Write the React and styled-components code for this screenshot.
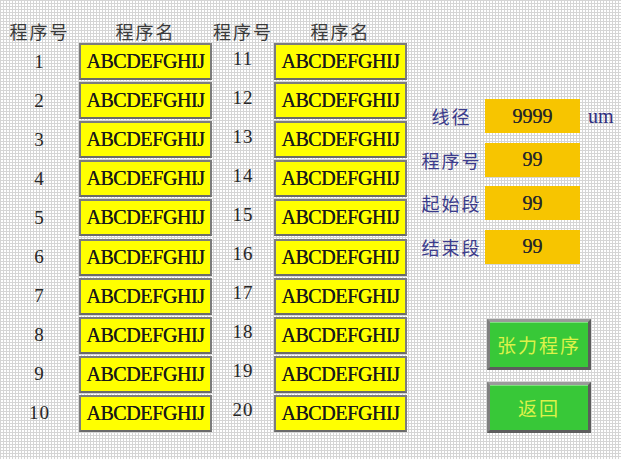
import React from 'react';
import styled, { createGlobalStyle } from 'styled-components';

const GlobalStyle = createGlobalStyle`
  body {
    margin: 0;
  }
`;

const serif = `'Liberation Serif', 'Times New Roman', serif`;
const cjk = `'Noto Sans CJK SC', 'Noto Sans', sans-serif`;

const Screen = styled.div`
  width: 621px;
  height: 459px;
  display: flex;
  overflow: hidden;
  background-color: #ffffff;
  background-image:
    linear-gradient(to right, #d5d5d5 1px, transparent 1px),
    linear-gradient(to bottom, #d5d5d5 1px, transparent 1px);
  background-size: 3px 3px;
`;

const Table = styled.div`
  display: grid;
  grid-template-columns: 79px 133px 62px 133px;
  grid-template-rows: 20px repeat(10, 37px);
  row-gap: 2.1px;
  padding-top: 21px;
  align-content: start;
`;

const HeadCell = styled.div`
  font-family: ${cjk};
  font-size: 18px;
  letter-spacing: 2px;
  line-height: 20px;
  color: #3a3a3a;
  text-align: center;
  white-space: nowrap;
`;

const Num = styled.div`
  display: flex;
  align-items: center;
  justify-content: center;
  font-family: ${serif};
  font-size: 19px;
  letter-spacing: 1px;
  color: #262626;
  padding-bottom: ${p => (p.$raised ? 6 : 0)}px;
`;

const NameBox = styled.div`
  box-sizing: border-box;
  display: flex;
  align-items: center;
  justify-content: center;
  background: #ffff00;
  border: 2px solid #7c7c7c;
  border-bottom-color: #6a6a6a;
  font-family: ${serif};
  font-size: 20px;
  letter-spacing: -0.4px;
  color: #1a1a1a;
  text-shadow: 0 0 0.6px #1a1a1a;
  white-space: nowrap;
`;

const Panel = styled.div`
  display: flex;
  flex-direction: column;
  margin-left: 11px;
  padding-top: 99px;
`;

const Fields = styled.div`
  display: grid;
  grid-template-columns: 67px 95px auto;
  grid-auto-rows: 34px;
  row-gap: 9.6px;
  align-items: center;
`;

const Label = styled.div`
  font-family: ${cjk};
  font-size: 18px;
  letter-spacing: 2px;
  color: #3b3b8c;
  text-align: center;
  white-space: nowrap;
`;

const Value = styled.div`
  height: 100%;
  display: flex;
  align-items: center;
  justify-content: center;
  background: #f7c500;
  font-family: ${serif};
  font-size: 20px;
  color: #2a2a2a;
  text-shadow: 0 0 0.5px #2a2a2a;
`;

const Unit = styled.div`
  padding-left: 8px;
  font-family: ${serif};
  font-size: 20px;
  color: #2e2e80;
`;

const Buttons = styled.div`
  display: flex;
  flex-direction: column;
  gap: 12px;
  margin: 55px 0 0 69px;
`;

const Button = styled.button`
  box-sizing: border-box;
  width: 104px;
  height: 51px;
  padding: 0;
  background: #38c838;
  border: 3px solid #5c5c5c;
  border-top-color: #9a9a9a;
  border-left-color: #808080;
  box-shadow: inset 0 1px 0 #7fe07f;
  font-family: ${cjk};
  font-size: 19px;
  letter-spacing: 2px;
  color: #dcf24a;
  cursor: pointer;
`;

const rows = Array.from({ length: 10 }, (_, i) => i + 1);

const fields = [
  { label: '线径', value: '9999', unit: 'um' },
  { label: '程序号', value: '99' },
  { label: '起始段', value: '99' },
  { label: '结束段', value: '99' },
];

export default function App() {
  return (
    <>
      <GlobalStyle />
      <Screen>
        <Table>
          <HeadCell>程序号</HeadCell>
          <HeadCell>程序名</HeadCell>
          <HeadCell>程序号</HeadCell>
          <HeadCell>程序名</HeadCell>
          {rows.map(n => (
            <React.Fragment key={n}>
              <Num>{n}</Num>
              <NameBox>ABCDEFGHIJ</NameBox>
              <Num $raised>{n + 10}</Num>
              <NameBox>ABCDEFGHIJ</NameBox>
            </React.Fragment>
          ))}
        </Table>
        <Panel>
          <Fields>
            {fields.map(f => (
              <React.Fragment key={f.label}>
                <Label>{f.label}</Label>
                <Value>{f.value}</Value>
                <Unit>{f.unit}</Unit>
              </React.Fragment>
            ))}
          </Fields>
          <Buttons>
            <Button>张力程序</Button>
            <Button>返回</Button>
          </Buttons>
        </Panel>
      </Screen>
    </>
  );
}
